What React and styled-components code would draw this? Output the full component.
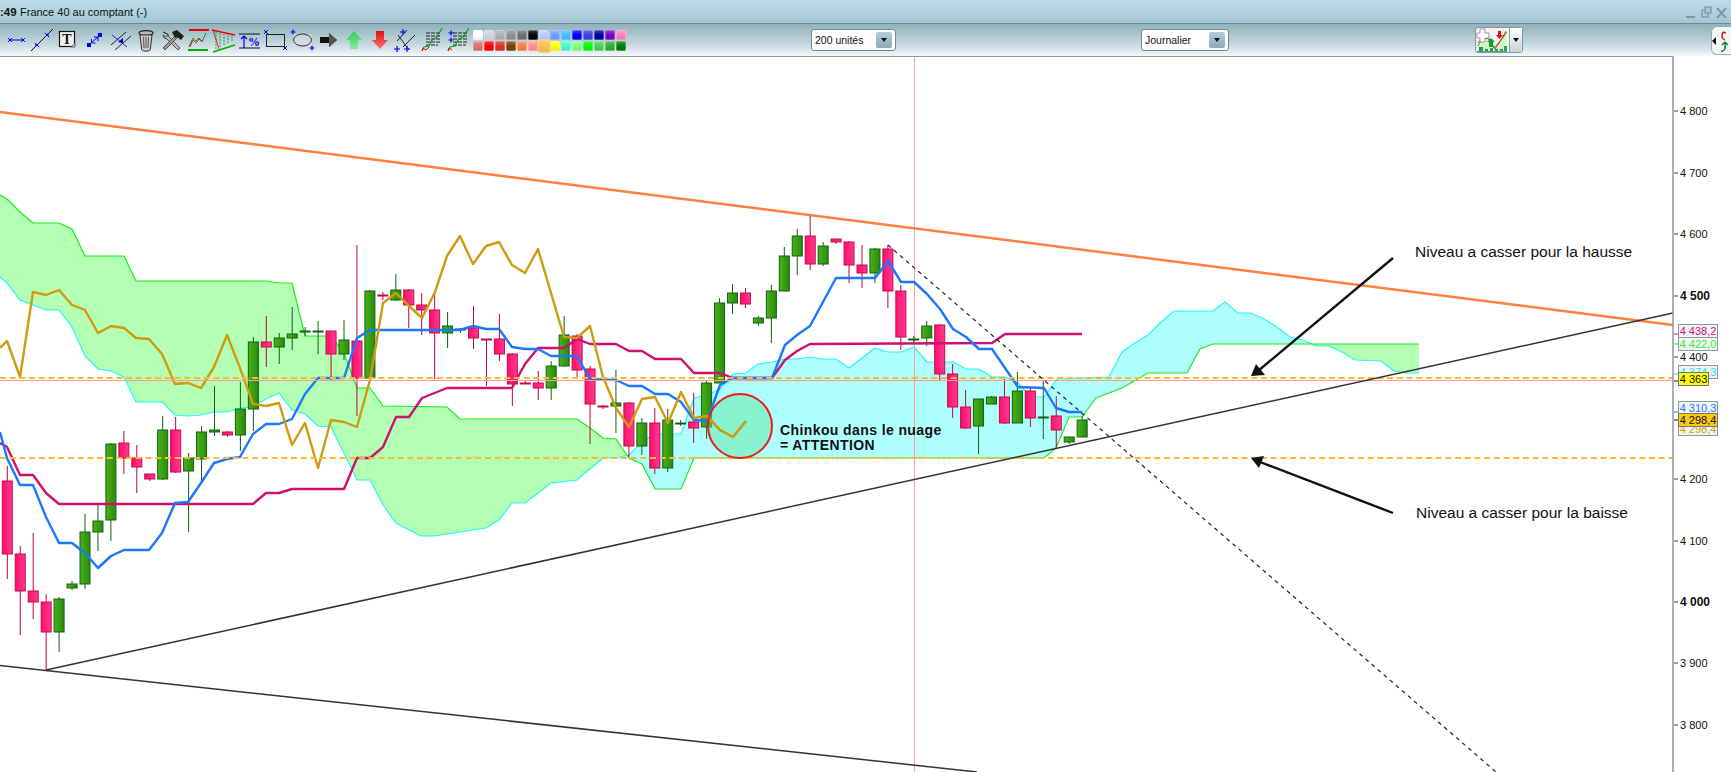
import React from 'react';
import styled, { createGlobalStyle } from 'styled-components';

const GlobalStyle = createGlobalStyle`
  html, body { margin: 0; padding: 0; background: #fff; overflow: hidden; }
  body { font-family: "Liberation Sans", Arial, sans-serif; }
`;

// [colour, body top, body bottom, wick top, wick bottom]
const candles = [
  ['r', 481, 554, 466, 579], ['r', 554, 591, 546, 635], ['r', 591, 602, 533, 619], ['r', 602, 632, 594, 670],
  ['g', 599, 632, 597, 652], ['g', 584, 588, 581, 590], ['g', 532, 584, 514, 589], ['g', 521, 532, 505, 551],
  ['g', 444, 520, 443, 541], ['r', 443, 458, 431, 474], ['r', 458, 467, 445, 493], ['r', 474, 479, 474, 481],
  ['g', 430, 479, 416, 480], ['r', 430, 472, 417, 473], ['g', 458, 471, 453, 532], ['g', 432, 459, 426, 482],
  ['g', 430, 432, 386, 436], ['r', 432, 435, 431, 437], ['g', 409, 435, 382, 451], ['g', 342, 409, 337, 431],
  ['r', 342, 347, 316, 367], ['g', 338, 347, 333, 364], ['g', 334, 338, 307, 350], ['g', 331, 331, 327, 336],
  ['g', 331, 331, 321, 354], ['r', 331, 354, 331, 380], ['g', 340, 354, 320, 360], ['r', 341, 378, 245, 416],
  ['g', 291, 378, 290, 378], ['r', 295, 295, 292, 300], ['g', 290, 300, 274, 301], ['r', 290, 305, 289, 328],
  ['r', 305, 310, 293, 335], ['r', 310, 333, 292, 379], ['g', 326, 333, 312, 348], ['g', 329, 329, 328, 333],
  ['r', 328, 338, 306, 349], ['r', 339, 339, 339, 386], ['r', 339, 354, 314, 361], ['r', 354, 384, 353, 406],
  ['r', 383, 383, 380, 384], ['r', 383, 388, 371, 400], ['g', 366, 388, 361, 400], ['g', 335, 366, 316, 367],
  ['r', 336, 370, 334, 377], ['r', 369, 404, 366, 444], ['r', 406, 406, 405, 409], ['g', 403, 406, 370, 433],
  ['r', 403, 446, 402, 457], ['g', 423, 446, 418, 455], ['r', 423, 468, 408, 474], ['g', 420, 468, 409, 472],
  ['g', 423, 423, 420, 426], ['r', 422, 428, 393, 443], ['g', 383, 427, 381, 439], ['g', 303, 383, 298, 383],
  ['g', 293, 303, 284, 314], ['r', 293, 304, 288, 308], ['g', 318, 323, 316, 326], ['g', 291, 318, 285, 343],
  ['g', 256, 291, 247, 291], ['g', 236, 256, 229, 275], ['r', 236, 264, 216, 270], ['g', 246, 264, 242, 266],
  ['r', 239, 242, 239, 244], ['r', 242, 265, 241, 283], ['r', 265, 273, 245, 288], ['g', 249, 273, 248, 283],
  ['r', 249, 291, 245, 308], ['r', 291, 337, 285, 350], ['g', 339, 339, 336, 342], ['g', 326, 338, 321, 346],
  ['r', 325, 374, 324, 380], ['r', 374, 407, 364, 418], ['r', 407, 428, 390, 429], ['g', 399, 426, 399, 454],
  ['g', 397, 404, 396, 404], ['r', 397, 423, 379, 424], ['g', 391, 423, 372, 423], ['r', 391, 418, 388, 427],
  ['g', 417, 418, 380, 439], ['r', 416, 430, 396, 448], ['g', 437, 442, 437, 444], ['g', 420, 437, 416, 437],
];

const blueLine = '0,432 7,458 20,485 33,485 46,517 59,543 72,543 85,553 98,568 111,556 124,550 149,550 162,533 175,503 188,502 201,483 214,463 227,459 240,457 253,434 266,424 279,424 292,419 305,394 318,378 344,378 357,338 370,330 460,330 473,326 486,329 499,329 512,347 525,349 538,349 551,356 577,356 590,379 616,380 629,386 642,386 655,394 668,394 681,402 694,420 707,421 720,385 733,378 772,378 785,345 797,335 810,326 823,302 836,278 875,278 888,261 901,282 914,282 927,294 940,309 953,329 966,337 979,349 992,349 1018,387 1044,388 1056,408 1069,412 1082,412';
const pinkLine = '0,443 7,447 20,475 33,475 46,493 59,504 253,504 266,493 279,493 292,489 344,489 357,458 370,458 383,447 396,417 409,417 422,398 447,388 512,388 525,364 538,348 564,348 577,339 590,344 616,344 629,351 642,351 655,359 681,359 694,373 720,373 733,378 772,378 785,360 797,351 810,344 992,343 1005,334 1082,334';
const goldLine = '0,348 7,341 20,377 33,292 46,295 59,290 72,305 85,310 98,333 111,326 124,328 136,338 149,339 162,354 175,384 188,383 201,388 214,367 227,335 240,368 253,404 266,406 279,403 292,445 305,423 318,468 331,420 344,422 357,427 370,380 383,303 396,293 409,306 422,318 435,292 447,256 460,236 473,264 486,246 499,242 512,265 525,273 538,249 551,293 564,337 577,338 590,326 603,377 616,408 629,427 642,399 655,397 668,423 681,392 694,418 707,416 720,430 733,437 746,421';
const limeLine = '0,195 7,199 20,212 33,223 59,223 72,229 85,256 124,256 136,281 266,281 279,283 292,283 305,336 331,336 344,353 357,388 370,388 383,406 447,407 460,419 577,419 590,428 603,438 616,439 629,458 642,464 655,489 681,489 694,458 1044,458 1056,448 1069,417 1082,417 1096,398 1122,388 1148,373 1187,373 1200,349 1213,344 1419,344';
const cyanLine = '0,277 7,283 20,300 33,305 46,310 59,310 72,327 85,356 98,369 111,371 124,377 136,402 162,402 175,415 188,416 201,415 214,412 227,412 240,408 253,407 266,399 279,393 292,410 305,414 318,426 331,427 344,453 357,480 370,480 383,505 396,523 421,536 434,536 486,528 499,520 512,503 525,503 538,493 551,483 577,480 590,469 603,458 616,458 629,455 642,442 655,434 681,434 694,398 707,395 720,389 733,374 746,373 758,364 772,362 785,359 797,359 810,357 823,359 836,359 849,368 862,358 875,348 888,352 901,352 914,347 927,362 953,362 966,369 979,369 992,377 1005,377 1018,383 1031,397 1044,397 1057,379 1109,377 1122,352 1135,343 1148,335 1161,322 1174,311 1213,311 1225,302 1238,313 1251,313 1264,319 1277,327 1290,337 1303,340 1316,346 1329,346 1342,352 1355,360 1381,361 1394,371 1407,373 1419,373';

const parse = (s) => s.split(' ').map((p) => p.split(',').map(Number));

const yAt = (pts, x) => {
  for (let i = 1; i < pts.length; i++) {
    if (x <= pts[i][0]) {
      const [x0, y0] = pts[i - 1];
      const [x1, y1] = pts[i];
      return y0 + ((y1 - y0) * (x - x0)) / (x1 - x0);
    }
  }
  return pts[pts.length - 1][1];
};

// the cloud is split in two areas, by whichever span lies on top at each x
const cloudAreas = () => {
  const lime = parse(limeLine);
  const cyan = parse(cyanLine);
  const top = [];
  const limeBottom = [];
  const cyanBottom = [];
  for (let x = 0; x <= 1419; x++) {
    const l = yAt(lime, x);
    const c = yAt(cyan, x);
    top.push(`${x},${Math.min(l, c).toFixed(1)}`);
    limeBottom.unshift(`${x},${l.toFixed(1)}`);
    cyanBottom.unshift(`${x},${c.toFixed(1)}`);
  }
  return { green: [...top, ...cyanBottom].join(' '), blue: [...top, ...limeBottom].join(' ') };
};

const axisLabels = [
  ['4 800', 111, false], ['4 700', 173, false], ['4 600', 234, false], ['4 500', 296, true], ['4 400', 357, false],
  ['4 200', 479, false], ['4 100', 541, false], ['4 000', 602, true], ['3 900', 663, false], ['3 800', 725, false],
];

const axisTicks = [[334, '#d0107a'], [344, '#20e020'], [374, '#20e0e0'], [381, '#111'], [412, '#2070ff'], [420, '#111']];

const swatchRows = [
  ['#ffffff', '#d4d4d4', '#b0b0b0', '#909090', '#707070', '#000000', '#b8ccff', '#70a0ff', '#40c0ff', '#0000ff', '#4040e0', '#0000a0', '#8000c0', '#ff80c0'],
  ['#e07070', '#ff0000', '#e03030', '#804000', '#ff8040', '#ff9090', '#ffc050', '#ffff00', '#40ffc0', '#80ff80', '#00ff00', '#50d050', '#30b030', '#008000'],
];

const Page = styled.div`
  width: 1731px;
  height: 772px;
  display: flex;
  flex-direction: column;
  overflow: hidden;
`;

const TitleBar = styled.div`
  height: 23px;
  flex: none;
  display: flex;
  align-items: center;
  background: linear-gradient(#bbdfeb, #a3c5d1);
  border-bottom: 1px solid #6f8a96;
  font-size: 11px;
  color: #111;
`;

const Clock = styled.span`
  font-weight: bold;
  font-size: 11.5px;
  width: 20px;
  flex: none;
`;

const Title = styled.span`
  flex: 1;
`;

const WindowButtons = styled.div`
  display: flex;
  padding: 2px 3px 0 0;
`;

const Toolbar = styled.div`
  height: 32px;
  flex: none;
  display: flex;
  align-items: center;
  background: linear-gradient(#8fb1be, #c2d6dd 60%, #f4f8f9);
`;

const Tools = styled.div`
  display: flex;
  margin-left: 3px;
  flex: none;
`;

const IconSvg = styled.svg`
  flex: none;
  display: block;
`;

const IconLetter = styled.text`
  font-family: "Liberation Serif", serif;
  font-weight: bold;
  font-size: ${(p) => p.$size}px;
  fill: ${(p) => p.$color || '#111'};
  text-anchor: middle;
`;

const Palette = styled.div`
  display: grid;
  grid-template-columns: repeat(14, 10px);
  grid-auto-rows: 10px;
  gap: 1px;
  margin-left: 2px;
  flex: none;
`;

const Swatch = styled.div`
  border-radius: 2px;
  background: linear-gradient(rgba(255, 255, 255, 0.25), rgba(255, 255, 255, 0) 50%, rgba(0, 0, 0, 0.08)), ${(p) => p.$color};
  box-shadow: inset 0 0 0 1px rgba(255, 255, 255, 0.25);
  ${(p) => p.$active && 'transform: scale(1.35); position: relative;'}
`;

const Select = styled.div`
  width: ${(p) => p.$width}px;
  height: 22px;
  box-sizing: border-box;
  margin-left: ${(p) => p.$left}px;
  flex: none;
  display: flex;
  align-items: center;
  justify-content: space-between;
  padding: 0 3px;
  background: #fff;
  border: 1px solid #6e8896;
  border-radius: 3px;
`;

const SelectLabel = styled.span`
  font-size: 10.5px;
  color: #111;
`;

const SelectButton = styled.div`
  width: 16px;
  height: 16px;
  display: flex;
  align-items: center;
  justify-content: center;
  background: linear-gradient(#b4ced8, #87aab9);
  border-radius: 2px;
`;

const Caret = styled.div`
  width: 0;
  height: 0;
  border-left: 3.5px solid transparent;
  border-right: 3.5px solid transparent;
  border-top: 4px solid #111;
`;

const ChartButton = styled.div`
  width: 48px;
  height: 26px;
  box-sizing: border-box;
  margin-left: 246px;
  flex: none;
  display: flex;
  border: 1px solid #7f97a3;
  border-radius: 3px;
  background: #f4f4f4;
`;

const ChartThumb = styled.div`
  width: 33px;
  flex: none;
  border-right: 1px solid #8fa0a8;
  overflow: hidden;
`;

const ChartCaret = styled.div`
  flex: 1;
  display: flex;
  align-items: center;
  justify-content: center;
  background: linear-gradient(#fff, #c8d2d6);
`;

const SideWidget = styled.div`
  width: 20px;
  height: 29px;
  margin-left: auto;
  flex: none;
  background: #f2f6f7;
  border: 1px solid #99aabb;
  border-right: none;
  box-sizing: border-box;
  border-radius: 6px 0 0 6px;
`;

const ChartArea = styled.div`
  position: relative;
  flex: 1;
  background: #fff;
`;

const ChartSvg = styled.svg`
  display: block;
`;

const AxisText = styled.text`
  font-family: "Liberation Sans", Arial, sans-serif;
  font-size: ${(p) => (p.$bold ? 12 : 11)}px;
  font-weight: ${(p) => (p.$bold ? 'bold' : 'normal')};
  fill: #111;
`;

const Note = styled.div`
  position: absolute;
  left: ${(p) => p.$left}px;
  top: ${(p) => p.$top}px;
  font-size: 14px;
  line-height: 15px;
  font-weight: bold;
  letter-spacing: 0.4px;
  white-space: nowrap;
  color: #111;
`;

const Comment = styled.div`
  position: absolute;
  left: ${(p) => p.$left}px;
  top: ${(p) => p.$top}px;
  font-size: 15.5px;
  line-height: 18px;
  white-space: nowrap;
  color: #111;
`;

const PriceTag = styled.div`
  position: absolute;
  left: 1678px;
  top: ${(p) => p.$top}px;
  width: ${(p) => (p.$narrow ? 31 : 40)}px;
  height: 14px;
  box-sizing: border-box;
  display: flex;
  align-items: center;
  justify-content: center;
  font-size: 11px;
  white-space: nowrap;
  color: ${(p) => p.$color};
  background: ${(p) => p.$fill || '#f4f4f4'};
  border: 1px solid ${(p) => (p.$dark ? '#777' : '#8a9aa5')};
`;

const Candle = ({ i, data }) => {
  const [kind, top, bottom, wickTop, wickBottom] = data;
  const x = 7.3 + i * 12.95;
  const red = kind === 'r';
  return (
    <g>
      <line x1={x} x2={x} y1={wickTop} y2={wickBottom} stroke={red ? '#c40038' : '#0c6410'} strokeWidth="1" />
      <rect
        x={x - 5}
        y={top}
        width="10"
        height={Math.max(bottom - top, 1)}
        fill={red ? 'url(#redBody)' : 'url(#greenBody)'}
        stroke={red ? '#c80848' : '#0c6410'}
        strokeWidth="1"
      />
    </g>
  );
};

const Chart = () => {
  const cloud = cloudAreas();
  return (
    <ChartSvg viewBox="0 56 1731 716" width="1731" height="716">
      <defs>
        <linearGradient id="redBody" x1="0" x2="1" y1="0" y2="0">
          <stop offset="0" stopColor="#ff0f66" />
          <stop offset="1" stopColor="#ff3a96" />
        </linearGradient>
        <linearGradient id="greenBody" x1="0" x2="1" y1="0" y2="0">
          <stop offset="0" stopColor="#4ab214" />
          <stop offset="1" stopColor="#2a8a10" />
        </linearGradient>
      </defs>

      <polygon points={cloud.green} fill="#b3ffb3" />
      <polygon points={cloud.blue} fill="#b0ffff" />
      <polyline points={cyanLine} fill="none" stroke="#22f8f8" strokeWidth="1.2" />
      <polyline points={limeLine} fill="none" stroke="#14ee14" strokeWidth="1.2" />

      <line x1="914.5" x2="914.5" y1="56" y2="772" stroke="#ff9c9c" strokeWidth="1" />
      {candles.map((c, i) => <Candle key={i} i={i} data={c} />)}

      <polyline points={pinkLine} fill="none" stroke="#d0106e" strokeWidth="2.4" strokeLinejoin="round" />
      <polyline points={blueLine} fill="none" stroke="#1a78ff" strokeWidth="2.4" strokeLinejoin="round" />
      <polyline points={goldLine} fill="none" stroke="#d09a10" strokeWidth="2.4" strokeLinejoin="round" />

      <line x1="0" x2="1673" y1="380.5" y2="380.5" stroke="#ff9a9a" strokeWidth="1" />
      <line x1="0" x2="1673" y1="378" y2="378" stroke="#ffb833" strokeWidth="2" strokeDasharray="6 3.7" />
      <line x1="0" x2="1673" y1="458" y2="458" stroke="#ffb833" strokeWidth="2" strokeDasharray="6 3.7" />

      <line x1="0" x2="1673" y1="112" y2="325" stroke="#ff8040" strokeWidth="2.5" />
      <line x1="46" x2="1673" y1="670" y2="313" stroke="#333" strokeWidth="1.5" />
      <line x1="0" x2="977" y1="665.5" y2="772" stroke="#333" strokeWidth="1.5" />
      <line x1="888" x2="1496" y1="245" y2="772" stroke="#222" strokeWidth="1.2" strokeDasharray="4 4" />

      <line x1="1393" x2="1258" y1="258" y2="371" stroke="#111" strokeWidth="2.4" />
      <polygon points="1251,376 1256,364 1265,375" fill="#111" />
      <line x1="1393" x2="1260" y1="513" y2="462" stroke="#111" strokeWidth="2.4" />
      <polygon points="1251,458 1264,456 1259,468" fill="#111" />

      <circle cx="740" cy="426" r="32" fill="#60e8a0" fillOpacity="0.5" />
      <polyline points="707,416 720,430 733,437 746,421" fill="none" stroke="#d09a10" strokeWidth="2.4" />
      <circle cx="740" cy="426" r="32" fill="none" stroke="#f01818" strokeWidth="2" />

      <line x1="0" x2="1673" y1="56.5" y2="56.5" stroke="#8a9aa5" strokeWidth="1" />
      <line x1="1673" x2="1673" y1="56" y2="772" stroke="#8a9aa5" strokeWidth="1.5" />
      {axisLabels.map(([label, y, bold]) => (
        <g key={label}>
          <line x1="1674" x2="1678" y1={y} y2={y} stroke="#444" strokeWidth="1" />
          <AxisText x="1680" y={y + 4} $bold={bold}>{label}</AxisText>
        </g>
      ))}
      {axisTicks.map(([y, color]) => (
        <line key={y} x1="1674" x2="1678" y1={y} y2={y} stroke={color} strokeWidth="1" />
      ))}
    </ChartSvg>
  );
};

const Cross = ({ x, y, s = 2.5, c = '#0000f0' }) => (
  <path d={`M${x - s} ${y}H${x + s}M${x} ${y - s}V${y + s}`} stroke={c} strokeWidth="1.2" fill="none" />
);

const XMark = ({ x, y, s = 2, c = '#0000f0' }) => (
  <path d={`M${x - s} ${y - s}L${x + s} ${y + s}M${x + s} ${y - s}L${x - s} ${y + s}`} stroke={c} strokeWidth="1" fill="none" />
);

const ToolIcons = () => (
  <>
    <IconSvg viewBox="0 0 26 26" width="26" height="26">
      <path d="M7 13H20" stroke="#0000d0" strokeWidth="1" />
      <XMark x={7} y={13} /><XMark x={20} y={13} />
    </IconSvg>
    <IconSvg viewBox="0 0 26 26" width="26" height="26">
      <path d="M2 24L24 2" stroke="#111" strokeWidth="1" />
      <XMark x={8} y={18} s={2.2} /><XMark x={18} y={8} s={2.2} />
      <path d="M8 18l-2-1 1 3zM18 8l2 1-1-3z" fill="#0000f0" />
    </IconSvg>
    <IconSvg viewBox="0 0 26 26" width="26" height="26">
      <rect x="4.5" y="4.5" width="15" height="15" fill="#f2f2f2" stroke="#111" strokeWidth="1.2" />
      <path d="M16 20l4-4v4z" fill="#ccc" stroke="#333" strokeWidth="0.6" />
      <IconLetter x="12" y="17" $size={14}>T</IconLetter>
    </IconSvg>
    <IconSvg viewBox="0 0 26 26" width="26" height="26">
      <rect x="6" y="16" width="4" height="4" fill="#0000e8" />
      <rect x="17" y="6" width="4" height="4" fill="#0000e8" />
      <path d="M10 16l7-6M10.5 12v4h4M17 14v-4h-4" stroke="#0000e8" strokeWidth="1" fill="none" />
    </IconSvg>
    <IconSvg viewBox="0 0 26 26" width="26" height="26">
      <path d="M4 18L19 5M8 23L24 9" stroke="#111" strokeWidth="0.9" />
      <path d="M5 8L20 20" stroke="#0000e8" strokeWidth="0.8" />
      <path d="M16 11l-5 4 5 1z" fill="#0000f0" />
    </IconSvg>
    <IconSvg viewBox="0 0 26 26" width="26" height="26">
      <ellipse cx="13" cy="6" rx="7" ry="2.4" fill="#bbb" stroke="#222" strokeWidth="1.2" />
      <path d="M7 8l1.6 14a3 1.5 0 0 0 8.8 0L19 8z" fill="#c9c9c9" stroke="#333" strokeWidth="1" />
      <path d="M10.5 10l.5 11M13 10v11M15.5 10l-.5 11" stroke="#555" strokeWidth="1" />
    </IconSvg>
    <IconSvg viewBox="0 0 26 26" width="26" height="26">
      <path d="M4 5l5 2 1 3 11 11-2 2L8 12l-3-1-1-3 3 2 2-2z" fill="#bbb" stroke="#333" strokeWidth="0.8" />
      <path d="M4 21L17 8l2 2L6 23z" fill="#999" stroke="#333" strokeWidth="0.8" />
      <path d="M13 5l5-2 7 6-3 4-4-3-2 1z" fill="#222" />
    </IconSvg>
    <IconSvg viewBox="0 0 26 26" width="26" height="26">
      <rect x="4" y="2" width="20" height="2" fill="#f00000" />
      <rect x="3" y="22" width="20" height="2" fill="#00b000" />
      <path d="M4 20l4-9 3 3 3-3 3 4 4-9" fill="none" stroke="#00a000" strokeWidth="1" />
      <path d="M5 20l3-7 3 3 3-4 3 2" fill="none" stroke="#e00000" strokeWidth="0.8" />
    </IconSvg>
    <IconSvg viewBox="0 0 26 26" width="26" height="26">
      <path d="M1 3L24 8" stroke="#f00000" strokeWidth="1.6" />
      <path d="M2 25L24 18" stroke="#00b000" strokeWidth="1.6" />
      <path d="M5 5v17M9 6v15M13 7v12M17 8v9M21 9v6" stroke="#00a000" strokeWidth="0.8" strokeDasharray="2 1" />
      <path d="M2 3L8 22" stroke="#e00000" strokeWidth="0.8" />
    </IconSvg>
    <IconSvg viewBox="0 0 26 26" width="26" height="26">
      <path d="M2 7H23M2 21H23" stroke="#111" strokeWidth="1.2" />
      <path d="M7 21V9M4 12l3-3 3 3" stroke="#0000e0" strokeWidth="1.2" fill="none" />
      <IconLetter x="17" y="19" $size={12} $color="#0000e0">%</IconLetter>
    </IconSvg>
    <IconSvg viewBox="0 0 26 26" width="26" height="26">
      <rect x="3.5" y="7.5" width="18" height="12" fill="none" stroke="#222" strokeWidth="1" />
      <XMark x={3} y={5} /><XMark x={22} y={21} />
    </IconSvg>
    <IconSvg viewBox="0 0 26 26" width="26" height="26">
      <rect x="4" y="7" width="19" height="12" fill="#dde4ea" opacity="0.5" />
      <ellipse cx="13.5" cy="13" rx="9" ry="6" fill="none" stroke="#333" strokeWidth="1" />
      <Cross x={4} y={5} /><Cross x={23} y={21} />
    </IconSvg>
    <IconSvg viewBox="0 0 26 26" width="26" height="26">
      <path d="M5 10h9V6l8 7-8 7v-4H5z" fill="#111" />
      <path d="M14 6l8 7-8 7z" fill="#555" />
    </IconSvg>
    <IconSvg viewBox="0 0 26 26" width="26" height="26">
      <defs>
        <linearGradient id="upArrow" x1="0" x2="0" y1="0" y2="1">
          <stop offset="0" stopColor="#30d050" />
          <stop offset="1" stopColor="#90e8a0" />
        </linearGradient>
      </defs>
      <path d="M13 4l8 9h-4v9H9v-9H5z" fill="url(#upArrow)" />
    </IconSvg>
    <IconSvg viewBox="0 0 26 26" width="26" height="26">
      <defs>
        <linearGradient id="downArrow" x1="0" x2="0" y1="0" y2="1">
          <stop offset="0" stopColor="#e01010" />
          <stop offset="1" stopColor="#ff7070" />
        </linearGradient>
      </defs>
      <path d="M9 4h8v9h4l-8 9-8-9h4z" fill="url(#downArrow)" />
    </IconSvg>
    <IconSvg viewBox="0 0 26 26" width="26" height="26">
      <path d="M4 14L14 3M10 20L22 8M16 23L5 8" stroke="#111" strokeWidth="0.9" />
      <Cross x={10} y={5} s={3} /><Cross x={4} y={22} s={3} /><Cross x={14} y={22} s={3} />
    </IconSvg>
    <IconSvg viewBox="0 0 26 26" width="26" height="26">
      <path d="M7 6H21M7 9H21M7 12H21M7 15H21M7 18H19" stroke="#111" strokeWidth="0.9" strokeDasharray="4 1" />
      <path d="M3 24l2-4 5-1 3-6 5-3 5-9" fill="none" stroke="#00a000" strokeWidth="1.1" />
      <path d="M3 24l1-3 3 2 3-3" fill="none" stroke="#e00000" strokeWidth="1" />
    </IconSvg>
    <IconSvg viewBox="0 0 26 26" width="26" height="26">
      <path d="M8 6H23M8 9H23M8 12H23M8 15H23M8 18H21" stroke="#111" strokeWidth="0.9" strokeDasharray="4 1" />
      <path d="M3 24l2-4 5-1 3-6 5-3 6-9" fill="none" stroke="#00a000" strokeWidth="1.1" />
      <path d="M3 24l1-3 3 2" fill="none" stroke="#e00000" strokeWidth="1" />
      <Cross x={6} y={6} s={2.5} /><Cross x={6} y={13} s={2.5} />
    </IconSvg>
  </>
);

const Dropdown = ({ label, left, width }) => (
  <Select $left={left} $width={width}>
    <SelectLabel>{label}</SelectLabel>
    <SelectButton><Caret /></SelectButton>
  </Select>
);

const App = () => (
  <Page>
    <GlobalStyle />
    <TitleBar>
      <Clock>:49</Clock>
      <Title>France 40 au comptant (-)</Title>
      <WindowButtons>
        <svg width="42" height="14" viewBox="0 0 42 14">
          <path d="M0 11H9" stroke="#7f99a5" strokeWidth="2" />
          <rect x="16" y="4" width="6" height="7" fill="none" stroke="#7f99a5" strokeWidth="1.3" />
          <rect x="19" y="1" width="6" height="6" fill="#a9c9d4" stroke="#7f99a5" strokeWidth="1.3" />
          <path d="M31 2L40 12M40 2L31 12" stroke="#7f99a5" strokeWidth="2" />
        </svg>
      </WindowButtons>
    </TitleBar>

    <Toolbar>
      <Tools><ToolIcons /></Tools>
      <Palette>
        {swatchRows.flat().map((color, i) => <Swatch key={i} $color={color} $active={i === 20} />)}
      </Palette>
      <Dropdown label="200 unités" left={185} width={85} />
      <Dropdown label="Journalier" left={245} width={88} />
      <ChartButton>
        <ChartThumb>
          <svg width="32" height="25" viewBox="0 0 32 25">
            <path d="M2 18l5-9 6 2 5 9 7-8 5-9v20H2z" fill="#d4f4c8" />
            <path d="M2 18l5-9 6 2 5 9 7-8 5-9" fill="none" stroke="#18a018" strokeWidth="1" />
            <path d="M2 15l6-7 6 4 5 9 6-9 6-8" fill="none" stroke="#d01010" strokeWidth="0.8" />
            <path d="M4 1h5v4h4v5H9v4H4v-4H1V5h3z" fill="#fff" stroke="#999" strokeWidth="1" />
            <path d="M13 19v-5h-2l4-4 4 4h-2v5z" fill="#10a030" />
            <path d="M22 3h3v4h2l-3.5 4L20 7h2z" fill="#e01010" />
            <path d="M3 19h4v4H3zM9 21h3v2H9zM14 20h3v3h-3zM19 21h3v2h-3zM24 21h3v2h-3zM28 18h3v5h-3z" fill="#10b030" />
            <path d="M1 24H31" stroke="#2030c0" strokeWidth="1.2" />
          </svg>
        </ChartThumb>
        <ChartCaret><Caret /></ChartCaret>
      </ChartButton>
      <SideWidget>
        <svg width="20" height="29" viewBox="0 0 20 29">
          <path d="M4 10l-4 4 4 4z" fill="#111" />
          <path d="M13 13c-3-1-4-4-2-8M11 5l3 1M11 5l-1 3" fill="none" stroke="#e02020" strokeWidth="1.6" />
          <path d="M9 24c3 1 5-2 4-9M13 15l-3 3M13 15l3 3" fill="none" stroke="#109020" strokeWidth="1.6" />
        </svg>
      </SideWidget>
    </Toolbar>

    <ChartArea>
      <Chart />
      <Note $left={780} $top={367}>
        Chinkou dans le nuage
        <br />
        = ATTENTION
      </Note>
      <Comment $left={1415} $top={187}>Niveau a casser pour la hausse</Comment>
      <Comment $left={1416} $top={448}>Niveau a casser pour la baisse</Comment>

      <PriceTag $top={268} $color="#d0107a">4 438,2</PriceTag>
      <PriceTag $top={281} $color="#30f030">4 422,0</PriceTag>
      <PriceTag $top={309} $color="#20e8e8">4 374,3</PriceTag>
      <PriceTag $top={316} $fill="#ffff00" $color="#111" $dark $narrow>4 363</PriceTag>
      <PriceTag $top={345} $color="#2878ff">4 310,3</PriceTag>
      <PriceTag $top={366} $color="#d09a10">4 298,4</PriceTag>
      <PriceTag $top={357} $fill="#ffc810" $color="#111" $dark>4 298,4</PriceTag>
    </ChartArea>
  </Page>
);

export default App;
